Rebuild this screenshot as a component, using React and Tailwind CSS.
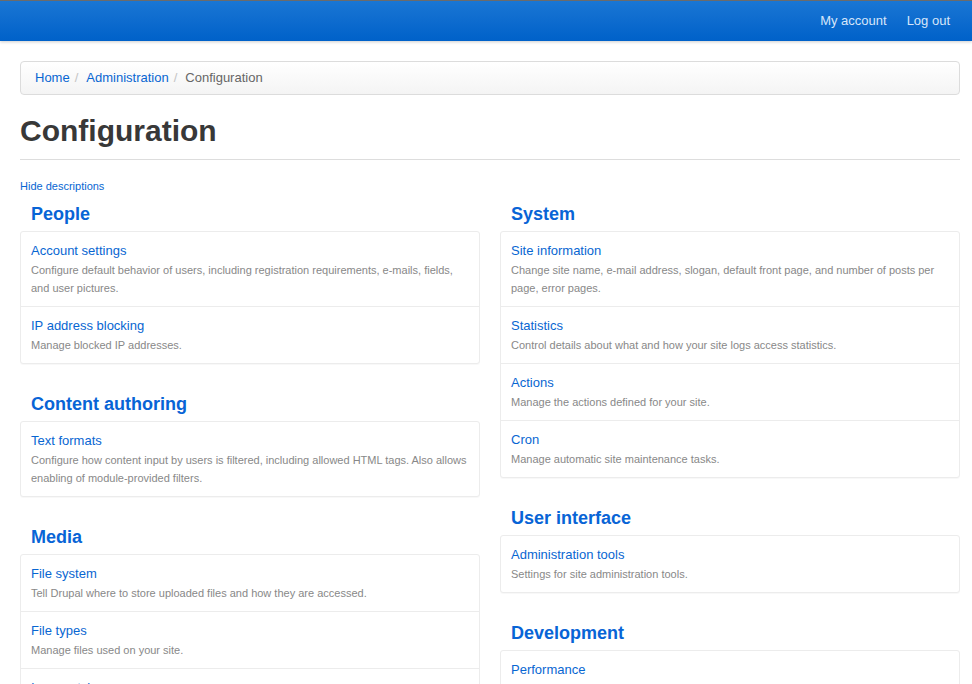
import React from 'react';

const sections = {
 left: [
 {
 title: 'People',
 items: [
 { name: 'Account settings', desc: 'Configure default behavior of users, including registration requirements, e-mails, fields, and user pictures.' },
 { name: 'IP address blocking', desc: 'Manage blocked IP addresses.' },
 ],
 },
 {
 title: 'Content authoring',
 items: [
 { name: 'Text formats', desc: 'Configure how content input by users is filtered, including allowed HTML tags. Also allows enabling of module-provided filters.' },
 ],
 },
 {
 title: 'Media',
 items: [
 { name: 'File system', desc: 'Tell Drupal where to store uploaded files and how they are accessed.' },
 { name: 'File types', desc: 'Manage files used on your site.' },
 { name: 'Image styles', desc: 'Configure styles that can be used for resizing or adjusting images on display.' },
 ],
 },
 ],
 right: [
 {
 title: 'System',
 items: [
 { name: 'Site information', desc: 'Change site name, e-mail address, slogan, default front page, and number of posts per page, error pages.' },
 { name: 'Statistics', desc: 'Control details about what and how your site logs access statistics.' },
 { name: 'Actions', desc: 'Manage the actions defined for your site.' },
 { name: 'Cron', desc: 'Manage automatic site maintenance tasks.' },
 ],
 },
 {
 title: 'User interface',
 items: [
 { name: 'Administration tools', desc: 'Settings for site administration tools.' },
 ],
 },
 {
 title: 'Development',
 items: [
 { name: 'Performance', desc: 'Enable or disable page caching for anonymous users and set CSS and JS bandwidth optimization options.' },
 { name: 'Logging and errors', desc: 'Settings for logging and alerts modules. Various modules can route Drupal\'s system events to different destinations, such as syslog, database, email, etc.' },
 ],
 },
 ],
};

const Section = ({ section, first }) => (
 <div className={first ? 'mt-[9px]' : 'mt-[29px]'}>
 <h3 className="px-[11px] text-[18px] font-bold leading-[22px] text-[#0864d6] mb-[6px]">{section.title}</h3>
 <div className="rounded-[3px] border border-[#ececec] bg-white shadow-[0_1px_1px_rgba(0,0,0,0.03)]">
 {section.items.map((it, i) => (
 <div key={i} className={`px-[10px] py-[9px] ${i > 0 ? 'border-t border-[#ececec]' : ''}`}>
 <a href="#" className="block text-[13px] leading-[20px] text-[#0866d2]">{it.name}</a>
 <p className="text-[11px] leading-[18px] text-[#888888]">{it.desc}</p>
 </div>
 ))}
 </div>
 </div>
);

export default function App() {
 return (
 <div className="h-[684px] overflow-hidden bg-white" style={{ fontFamily: '"Liberation Sans", Arial, sans-serif' }}>
 <div className="h-[41px] border-t border-[#6b6b6b] bg-gradient-to-b from-[#1976d4] to-[#0061c9] shadow-[0_1px_3px_rgba(0,0,0,0.2)]">
 <div className="ml-[20px] flex h-full w-[940px] items-center justify-end">
 <a href="#" className="px-[10px] text-[13px] text-[#d6e6fa]">My account</a>
 <a href="#" className="px-[10px] text-[13px] text-[#d6e6fa]">Log out</a>
 </div>
 </div>

 <div className="ml-[20px] w-[940px] pt-[20px]">
 <div className="flex h-[34px] items-center rounded-[4px] border border-[#dcdcdc] bg-gradient-to-b from-white to-[#f4f4f4] px-[14px] text-[13px]">
 <a href="#" className="text-[#0866d2]">Home</a>
 <span className="pl-[5px] pr-[8px] text-[#c4c4c4]">/</span>
 <a href="#" className="text-[#0866d2]">Administration</a>
 <span className="pl-[5px] pr-[8px] text-[#c4c4c4]">/</span>
 <span className="text-[#666]">Configuration</span>
 </div>

 <h1 className="mt-[18px] text-[30px] font-bold leading-[36px] text-[#383838]">Configuration</h1>
 <div className="mt-[10px] border-t border-[#dddddd]"></div>

 <a href="#" className="mt-[18px] block text-[11px] leading-[16px] text-[#0866d2]">Hide descriptions</a>

 <div className="grid grid-cols-2 gap-x-[20px]">
 <div>
 {sections.left.map((s, i) => <Section key={i} section={s} first={i === 0} />)}
 </div>
 <div>
 {sections.right.map((s, i) => <Section key={i} section={s} first={i === 0} />)}
 </div>
 </div>
 </div>
 </div>
 );
}
